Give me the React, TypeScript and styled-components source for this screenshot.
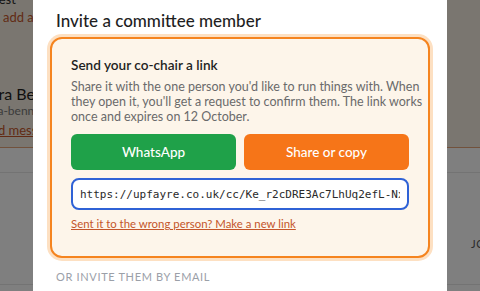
import React from "react";
import styled, { createGlobalStyle } from "styled-components";

const Global = createGlobalStyle`
  html, body { margin: 0; padding: 0; }
  body {
    width: 480px;
    height: 291px;
    overflow: hidden;
    background: #ffffff;
    font-family: Lato, "Noto Sans", sans-serif;
  }
`;

/* ---------- background page ---------- */
const Page = styled.div`
  width: 480px;
  height: 291px;
  overflow: hidden;
  display: flex;
  flex-direction: column;
`;

const TopSection = styled.div`
  background: #f5ede0;
  height: 147px;
  border-bottom: 1px solid #e4a579;
  display: flex;
  justify-content: space-between;
  flex-shrink: 0;
`;

const LeftCol = styled.div`
  margin-left: -18px;
  margin-top: -9px;
  display: flex;
  flex-direction: column;
`;

const BgText = styled.div<{ $size?: number; $color?: string; $mt?: number; $ml?: number; $underline?: boolean }>`
  font-size: ${(p) => p.$size ?? 13}px;
  line-height: ${(p) => (p.$size ?? 13) + 4}px;
  color: ${(p) => p.$color ?? "#2a2a2a"};
  margin-top: ${(p) => p.$mt ?? 0}px;
  margin-left: ${(p) => p.$ml ?? 0}px;
  text-decoration: ${(p) => (p.$underline ? "underline" : "none")};
  white-space: nowrap;
`;

const Row = styled.div<{ $h: number }>`
  height: ${(p) => p.$h}px;
  border-bottom: 1px solid #e6e6e6;
  display: flex;
  align-items: flex-end;
  justify-content: space-between;
  flex-shrink: 0;
`;

const ColHead = styled.div`
  font-size: 11px;
  letter-spacing: 0.05em;
  color: #555;
  margin-right: -34px;
  margin-bottom: 34px;
`;

const BgCell = styled.div`
  font-size: 14px;
  color: #2a2a2a;
  margin-left: -6px;
  margin-bottom: -12px;
`;

/* ---------- modal ---------- */
const Overlay = styled.div`
  position: fixed;
  inset: 0;
  background: rgba(0, 0, 0, 0.5);
  display: flex;
  justify-content: center;
  align-items: flex-start;
`;

const Modal = styled.div`
  width: 414px;
  height: 320px;
  background: #ffffff;
  padding: 9px 23px 0;
  box-sizing: border-box;
  display: flex;
  flex-direction: column;
`;

const Title = styled.h2`
  margin: 0;
  font-size: 17px;
  line-height: 24px;
  font-weight: 500;
  color: #1f1f1f;
`;

const Card = styled.div`
  margin: 4px -6px 0;
  background: #fdf5ea;
  border: 2px solid #f5841f;
  border-radius: 12px;
  box-shadow: 0 0 0 3px #fde0c2;
  padding: 16px 19px 24px;
  display: flex;
  flex-direction: column;
`;

const CardTitle = styled.h3`
  margin: 0;
  font-size: 13.6px;
  line-height: 20px;
  font-weight: 600;
  color: #1f1f1f;
`;

const Body = styled.div`
  margin-top: 4px;
  display: flex;
  flex-direction: column;
`;

const BodyLine = styled.span`
  font-size: 12.5px;
  line-height: 15px;
  color: #6a6a6a;
  white-space: nowrap;
`;

const Buttons = styled.div`
  margin-top: 10px;
  display: grid;
  grid-template-columns: 1fr 1fr;
  gap: 8px;
`;

const Btn = styled.button<{ $bg: string }>`
  height: 36px;
  border: none;
  border-radius: 6px;
  background: ${(p) => p.$bg};
  color: #ffffff;
  font-family: inherit;
  font-size: 13.5px;
  font-weight: 500;
  cursor: pointer;
`;

const LinkInput = styled.input`
  margin-top: 8px;
  height: 32px;
  box-sizing: border-box;
  border: 2px solid #2f62d6;
  border-radius: 8px;
  background: #ffffff;
  padding: 0 7px;
  font-family: "DejaVu Sans Mono", monospace;
  font-size: 11px;
  color: #2a2a2a;
  outline: none;
`;

const Reset = styled.a`
  margin-top: 6px;
  font-size: 11.4px;
  line-height: 16px;
  color: #c4562a;
  text-decoration: underline;
  cursor: pointer;
`;

const OrLabel = styled.div`
  margin-top: 12px;
  font-size: 11px;
  letter-spacing: 0.06em;
  color: #9ba0a8;
  text-transform: uppercase;
`;

const bodyLines = [
  "Share it with the one person you'd like to run things with. When",
  "they open it, you'll get a request to confirm them. The link works",
  "once and expires on 12 October.",
];

export default function App() {
  return (
    <>
      <Global />
      <Page>
        <TopSection>
          <LeftCol>
            <BgText $size={13} $color="#2a2a2a">Guest</BgText>
            <BgText $size={13} $color="#c4562a" $mt={1} $ml={21}>add as co-chair</BgText>
            <BgText $size={13} $color="#2a2a2a" $mt={22} $ml={-10}>Host</BgText>
            <BgText $size={16} $color="#1f1f1f" $mt={19}>Sara Bennett</BgText>
            <BgText $size={12} $color="#777" $mt={-1}>sara-bennett@mail.com</BgText>
            <BgText $size={13} $color="#c4562a" $mt={3} $underline>Add message</BgText>
          </LeftCol>
        </TopSection>
        <Row $h={24} />
        <Row $h={111}>
          <BgCell />
          <ColHead>JOINED</ColHead>
        </Row>
        <Row $h={20}>
          <BgCell>Ed Mitchell</BgCell>
        </Row>
      </Page>
      <Overlay>
        <Modal>
          <Title>Invite a committee member</Title>
          <Card>
            <CardTitle>Send your co-chair a link</CardTitle>
            <Body>
              {bodyLines.map((l) => (
                <BodyLine key={l}>{l}</BodyLine>
              ))}
            </Body>
            <Buttons>
              <Btn $bg="#1fa149">WhatsApp</Btn>
              <Btn $bg="#f67518">Share or copy</Btn>
            </Buttons>
            <LinkInput readOnly value="https://upfayre.co.uk/cc/Ke_r2cDRE3Ac7LhUq2efL-Nx8aQ" />
            <Reset>Sent it to the wrong person? Make a new link</Reset>
          </Card>
          <OrLabel>Or invite them by email</OrLabel>
        </Modal>
      </Overlay>
    </>
  );
}
